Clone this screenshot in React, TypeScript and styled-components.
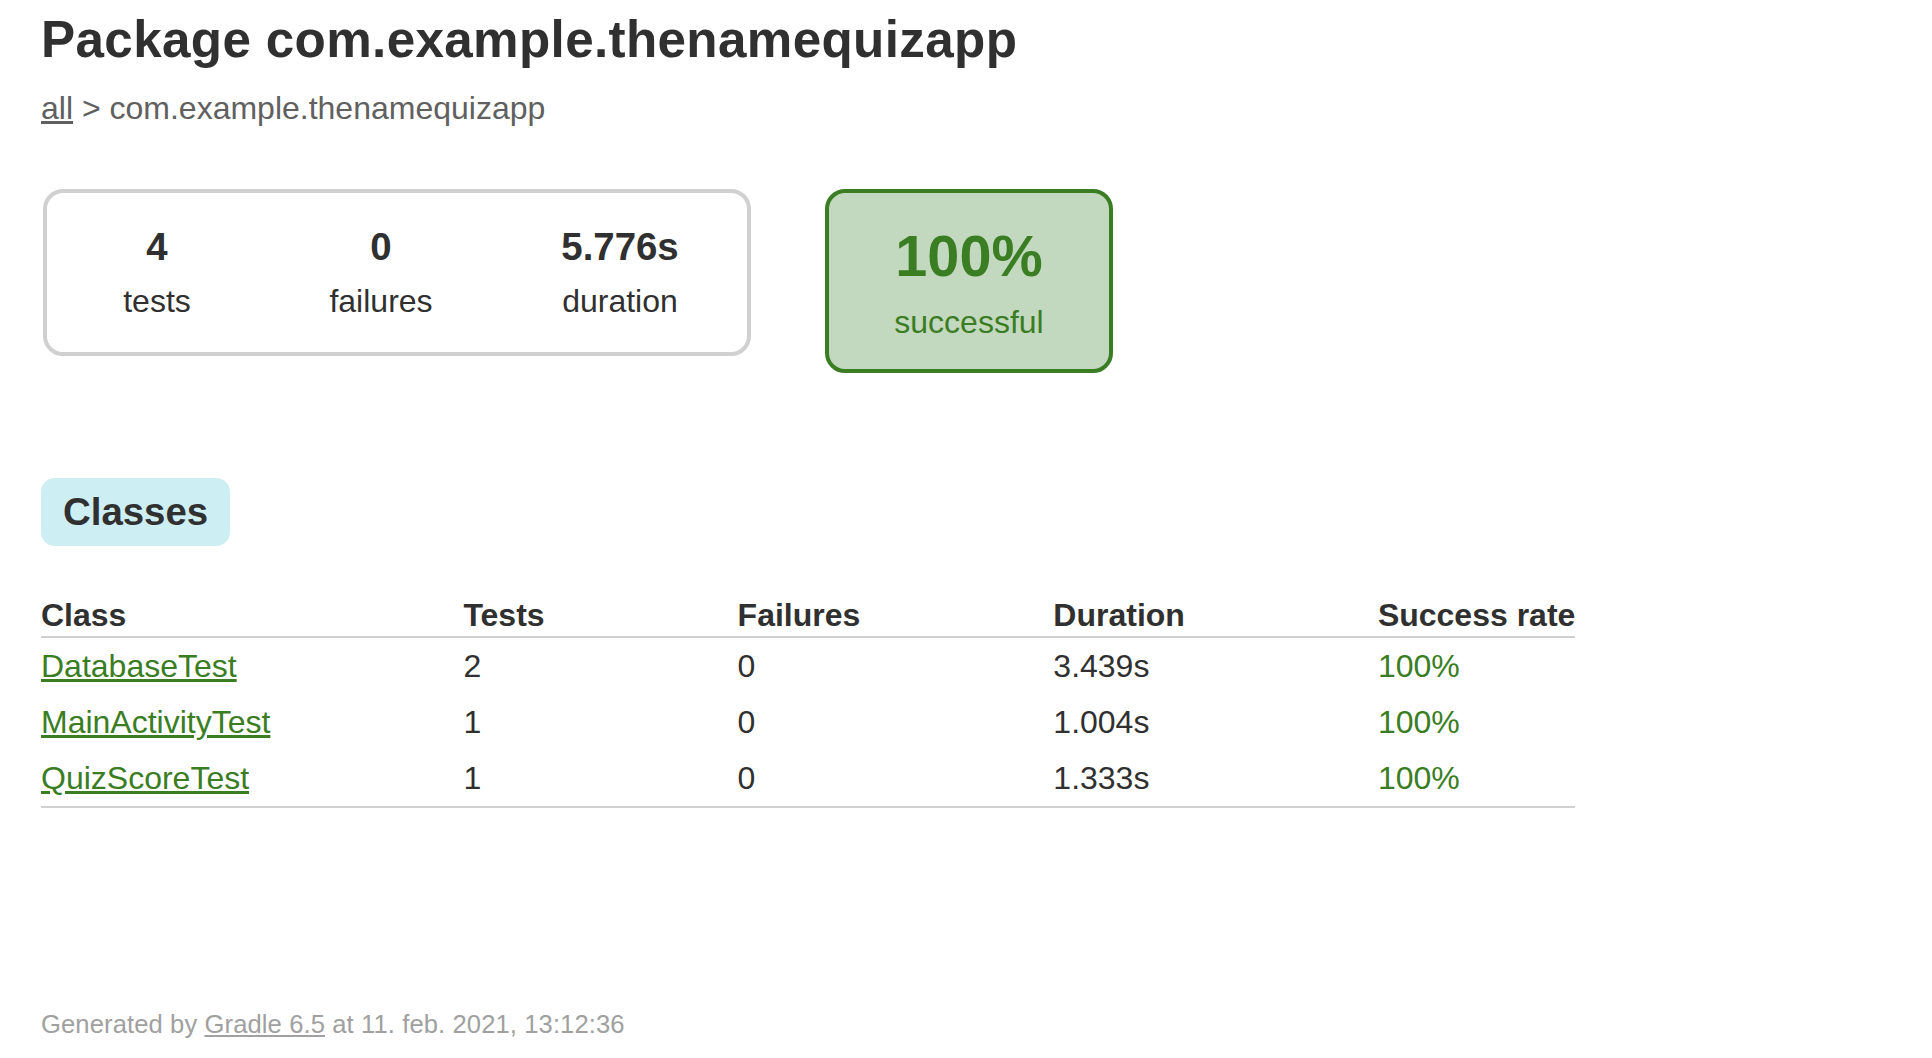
import React from "react";
import styled, { createGlobalStyle } from "styled-components";

const GlobalStyle = createGlobalStyle`
  html, body {
    margin: 0;
    padding: 0;
    background: #ffffff;
  }
  body {
    font-family: "Liberation Sans", Arial, Helvetica, sans-serif;
    font-size: 32px;
    color: #303030;
  }
`;

const GREEN = "#3a7d23";
const GREEN_BG = "#c3d9bf";
const GRAY_BORDER = "#d0d0d0";

const Content = styled.div`
  padding: 11px 50px 30px 41px;
`;

const Title = styled.h1`
  margin: 0 0 20px 0;
  font-size: 51.2px;
  font-weight: bold;
  line-height: 58.8px;
  letter-spacing: 0.35px;
  white-space: nowrap;
  color: #303030;
`;

const Breadcrumbs = styled.div`
  color: #606060;
  line-height: 36.8px;
`;

const CrumbLink = styled.a`
  color: #606060;
  text-decoration: underline;
`;

const Summary = styled.div`
  margin-top: 62px;
  display: flex;
  align-items: flex-start;
`;

const SummaryGroup = styled.div`
  margin-left: 2px;
  display: flex;
  gap: 4px;
  padding-right: 2px;
  border: solid 4px ${GRAY_BORDER};
  border-radius: 20px;
`;

const InfoBox = styled.div<{ $width?: number }>`
  width: ${(p) => p.$width ?? 220}px;
  padding: 32px 0 33px;
  text-align: center;
`;

const Counter = styled.div`
  font-size: 38.4px;
  font-weight: bold;
  line-height: 44px;
  margin-bottom: 14px;
`;

const Label = styled.p`
  margin: 0;
  line-height: 36.8px;
`;

const SuccessRate = styled.div`
  margin-left: 74px;
  width: 280px;
  padding: 31px 0 29px;
  text-align: center;
  background-color: ${GREEN_BG};
  border: solid 4px ${GREEN};
  border-radius: 20px;
  color: ${GREEN};
`;

const Percent = styled.div`
  font-size: 57.6px;
  font-weight: bold;
  line-height: 64px;
  margin-bottom: 16px;
`;

const TabLinks = styled.ul`
  list-style: none;
  margin: 0;
  padding: 105px 0 0 0;
  display: flex;
`;

const TabItem = styled.li<{ $selected?: boolean }>`
  padding: 10px 20px;
  border-radius: 14px;
  border: solid 2px ${(p) => (p.$selected ? "#cdeef3" : "#d4d4d4")};
  background-color: ${(p) => (p.$selected ? "#cdeef3" : "#f0f0f0")};
  margin-right: 50px;
`;

const TabLabel = styled.a`
  display: block;
  font-size: 38.4px;
  font-weight: bold;
  line-height: 44px;
  color: #303030;
  text-decoration: none;
`;

const Table = styled.table`
  margin-top: 49px;
  border-collapse: collapse;
  border-bottom: solid 2px ${GRAY_BORDER};
`;

const Th = styled.th`
  text-align: left;
  white-space: nowrap;
  padding: 2px 0 2px 193px;
  line-height: 36.8px;
  border-bottom: solid 2px ${GRAY_BORDER};
  &:first-child {
    padding-left: 0;
  }
`;

const Td = styled.td<{ $success?: boolean }>`
  white-space: nowrap;
  padding: 10px 0 10px 193px;
  line-height: 36px;
  color: ${(p) => (p.$success ? GREEN : "#303030")};
  &:first-child {
    padding-left: 0;
  }
`;

const ClassLink = styled.a`
  color: ${GREEN};
  text-decoration: underline;
`;

const Footer = styled.div`
  margin-top: 202px;
  font-size: 25.6px;
  line-height: 29.4px;
  letter-spacing: 0.1px;
  white-space: nowrap;
  color: #a0a0a0;
`;

const FooterLink = styled.a`
  color: #a0a0a0;
  text-decoration: underline;
`;

const rows = [
  { name: "DatabaseTest", tests: 2, failures: 0, duration: "3.439s", rate: "100%" },
  { name: "MainActivityTest", tests: 1, failures: 0, duration: "1.004s", rate: "100%" },
  { name: "QuizScoreTest", tests: 1, failures: 0, duration: "1.333s", rate: "100%" },
];

export default function App() {
  return (
    <>
      <GlobalStyle />
      <Content>
        <Title>Package com.example.thenamequizapp</Title>
        <Breadcrumbs>
          <CrumbLink href="#">all</CrumbLink> &gt; com.example.thenamequizapp
        </Breadcrumbs>
        <Summary>
          <SummaryGroup>
            <InfoBox>
              <Counter>4</Counter>
              <Label>tests</Label>
            </InfoBox>
            <InfoBox>
              <Counter>0</Counter>
              <Label>failures</Label>
            </InfoBox>
            <InfoBox $width={250}>
              <Counter>5.776s</Counter>
              <Label>duration</Label>
            </InfoBox>
          </SummaryGroup>
          <SuccessRate>
            <Percent>100%</Percent>
            <Label>successful</Label>
          </SuccessRate>
        </Summary>
        <TabLinks>
          <TabItem $selected>
            <TabLabel href="#tab0">Classes</TabLabel>
          </TabItem>
        </TabLinks>
        <Table>
          <thead>
            <tr>
              <Th>Class</Th>
              <Th>Tests</Th>
              <Th>Failures</Th>
              <Th>Duration</Th>
              <Th>Success rate</Th>
            </tr>
          </thead>
          <tbody>
            {rows.map((r) => (
              <tr key={r.name}>
                <Td>
                  <ClassLink href="#">{r.name}</ClassLink>
                </Td>
                <Td>{r.tests}</Td>
                <Td>{r.failures}</Td>
                <Td>{r.duration}</Td>
                <Td $success>{r.rate}</Td>
              </tr>
            ))}
          </tbody>
        </Table>
        <Footer>
          Generated by <FooterLink href="#">Gradle 6.5</FooterLink> at 11. feb. 2021, 13:12:36
        </Footer>
      </Content>
    </>
  );
}
